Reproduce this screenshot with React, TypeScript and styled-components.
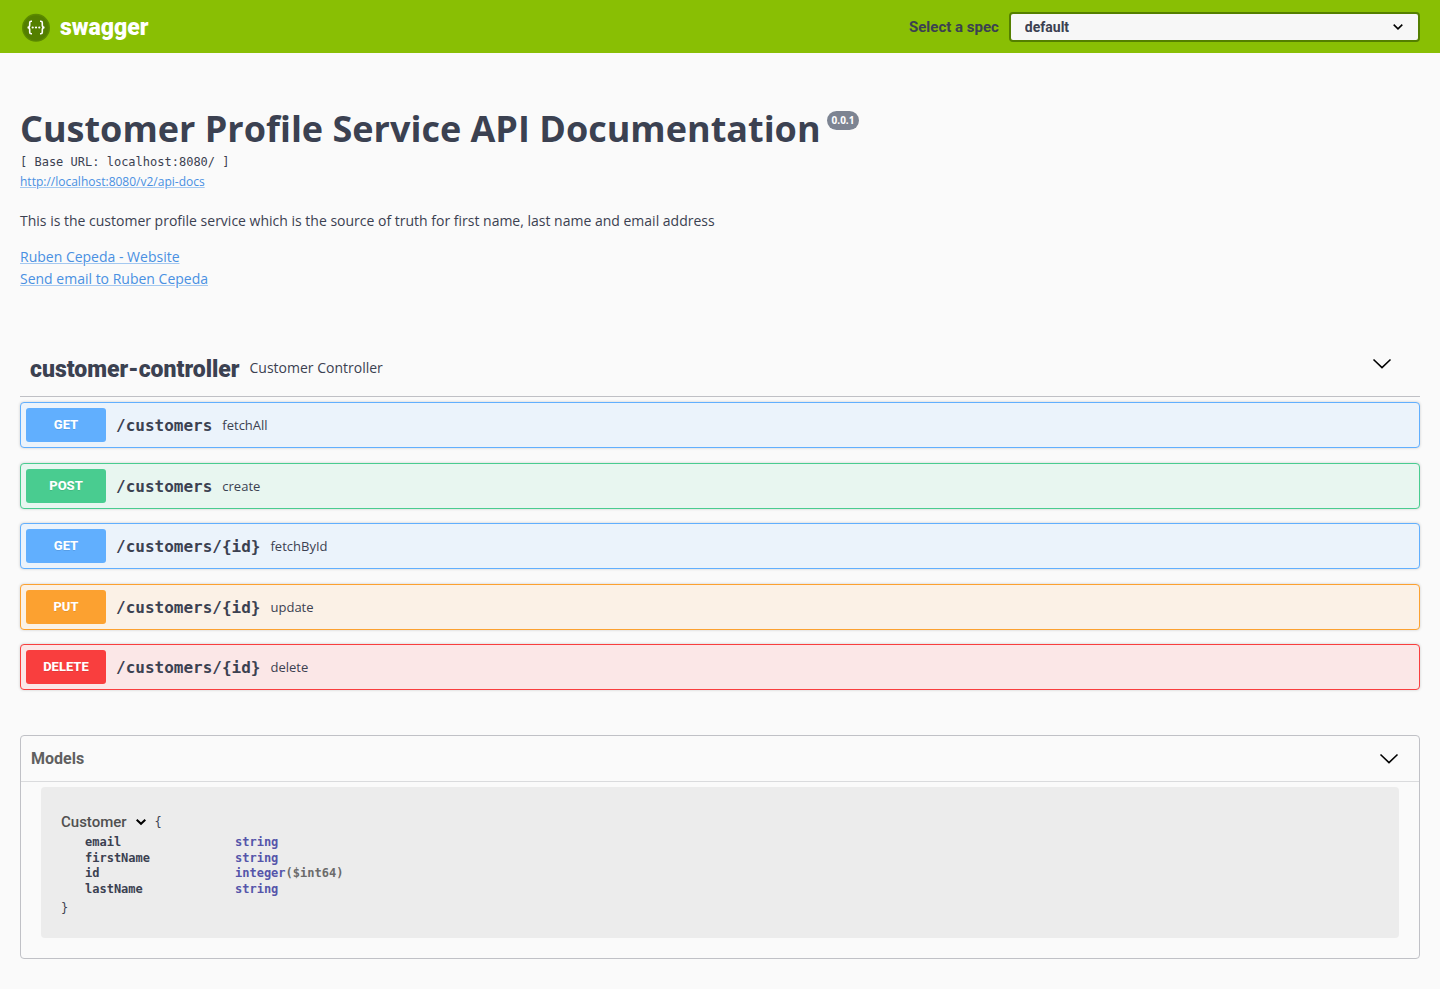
import React from "react";
import styled, { createGlobalStyle } from "styled-components";

const heading = `Roboto, "Open Sans", sans-serif`;
const body = `"Open Sans", "Noto Sans", sans-serif`;
const mono = `"DejaVu Sans Mono", "Liberation Mono", monospace`;

const GlobalStyle = createGlobalStyle`
  *, *::before, *::after { box-sizing: border-box; }
  body { margin: 0; background: #fafafa; color: #3b4151; font-family: ${body}; }
  button, select { font: inherit; color: inherit; }
  h1, h2, p { margin: 0; }
`;

const Topbar = styled.header`
  display: flex;
  align-items: center;
  justify-content: space-between;
  min-height: 53px;
  padding: 0 20px;
  background: #89bf04;
`;

const Brand = styled.a`
  display: flex;
  align-items: center;
  gap: 8px;
  color: #fff;
  font: 900 23px/34px ${heading};
  text-decoration: none;
`;

const BrandName = styled.span`
  padding-top: 2px;
`;

const SpecPicker = styled.div`
  display: flex;
  align-items: center;
  gap: 10px;
  flex: 0 1 511px;
  justify-content: flex-end;
  font: 700 15px/20px ${heading};
  white-space: nowrap;
`;

const SelectBox = styled.div`
  position: relative;
  flex: 1;
  svg {
    position: absolute;
    top: 11px;
    right: 16px;
    pointer-events: none;
  }
`;

const Select = styled.select`
  display: block;
  width: 100%;
  height: 30px;
  padding: 0 40px 0 14px;
  appearance: none;
  border: 2px solid #547f00;
  border-radius: 4px;
  background: #f7f7f7;
  font: 700 14px/20px ${heading};
`;

const Page = styled.main`
  padding: 52px 20px 30px;
`;

const Info = styled.section`
  display: flex;
  flex-direction: column;
  align-items: flex-start;
`;

const TitleRow = styled.div`
  display: flex;
  align-items: flex-start;
  gap: 6px;
`;

const Title = styled.h1`
  font: 700 36px/48px ${body};
`;

const Version = styled.span`
  margin-top: 6px;
  padding: 0 5px;
  border-radius: 10px;
  background: #7d8492;
  color: #fff;
  font: 700 10px/19px ${body};
`;

const BaseUrl = styled.pre`
  margin: 0;
  font: 400 12px/18px ${mono};
`;

const Link = styled.a<{ $small?: boolean }>`
  color: #4990e2;
  font-size: ${(p) => (p.$small ? 12 : 14)}px;
  line-height: 22px;
  text-decoration-color: #a4c8f0;
  text-underline-offset: 1px;
  text-decoration-thickness: 1px;
`;

const Description = styled.p`
  margin: 17px 0 14px;
  font-size: 14px;
  line-height: 22px;
`;

const TagHeader = styled.div`
  display: flex;
  align-items: flex-start;
  gap: 10px;
  min-height: 57px;
  margin: 50px 0 5px;
  padding: 12px 28px 0 10px;
  border-bottom: 1px solid #bfc0c5;
`;

const TagName = styled.h2`
  font: 900 23px/36px ${heading};
`;

const TagText = styled.span`
  flex: 1;
  font-size: 14px;
  line-height: 32px;
`;

const IconButton = styled.button`
  display: flex;
  padding: 6px 0;
  border: 0;
  background: none;
  cursor: pointer;
`;

const Operations = styled.div`
  display: flex;
  flex-direction: column;
  justify-content: space-between;
  min-height: 288px;
`;

const Operation = styled.button<{ $color: string; $fill: string }>`
  display: flex;
  align-items: center;
  gap: 10px;
  width: 100%;
  min-height: 46px;
  padding: 5px;
  border: 1px solid ${(p) => p.$color};
  border-radius: 4px;
  background: ${(p) => p.$fill};
  box-shadow: 0 0 3px rgba(0, 0, 0, 0.19);
  text-align: left;
  cursor: pointer;
`;

const Method = styled.span<{ $color: string }>`
  width: 80px;
  border-radius: 3px;
  background: ${(p) => p.$color};
  color: #fff;
  font: 800 13px/34px ${heading};
  text-align: center;
  text-shadow: 0 1px 0 rgba(0, 0, 0, 0.1);
`;

const Path = styled.span`
  padding-top: 2px;
  font: 700 16px/20px ${mono};
`;

const Summary = styled.span`
  font-size: 13px;
  line-height: 20px;
`;

const Models = styled.section`
  margin-top: 45px;
  padding-bottom: 20px;
  border: 1px solid #c0c1c6;
  border-radius: 4px;
`;

const ModelsHeader = styled.div`
  display: flex;
  align-items: center;
  justify-content: space-between;
  min-height: 46px;
  margin-bottom: 5px;
  padding: 0 20px 0 10px;
  border-bottom: 1px solid #dadbdd;
`;

const ModelsTitle = styled.h2`
  color: #606060;
  font: 700 16px/20px ${heading};
`;

const Model = styled.div`
  margin: 0 20px;
  padding: 24px 20px 20px;
  border-radius: 4px;
  background: #ececec;
  font: 400 12px/20px ${mono};
`;

const ModelToggle = styled.button`
  display: flex;
  align-items: center;
  gap: 8px;
  padding: 0;
  border: 0;
  background: none;
  font: 400 12px/22px ${mono};
  cursor: pointer;
`;

const ModelName = styled.span`
  color: #505050;
  font: 500 15px/22px ${heading};
`;

const Properties = styled.table`
  height: 62px;
  margin: 2px 0 1px 24px;
  border-collapse: collapse;
  font: 700 12px/15px ${mono};
  th {
    width: 150px;
    padding: 0;
    text-align: left;
  }
  td {
    padding: 0;
    color: #6b6b6b;
  }
`;

const TypeName = styled.span`
  color: #5555aa;
`;

const LargeArrow = () => (
  <svg width="20" height="12" viewBox="0 0 20 12" fill="none" stroke="#000" strokeWidth="1.6" aria-hidden="true">
    <path d="M1.5 1.5 10 9.7 18.5 1.5" />
  </svg>
);

const SmallArrow = ({ weight = 1.6 }: { weight?: number }) => (
  <svg width="12" height="8" viewBox="0 0 12 8" fill="none" stroke="#000" strokeWidth={weight} aria-hidden="true">
    <path d="M1.7 1.7 6 5.8 10.3 1.7" />
  </svg>
);

const Logo = () => (
  <svg width="32" height="32" viewBox="0 0 32 32" aria-hidden="true">
    <circle cx="16" cy="16.8" r="13.3" fill="#547f00" stroke="#5c8a00" strokeWidth="1.4" />
    <g fill="none" stroke="#fff" strokeWidth="1.6">
      <path d="M12 10.3h-.8q-1.5 0-1.5 1.5v2.4q0 2.2-2.2 2.3 2.2.1 2.2 2.3v2.4q0 1.5 1.5 1.5h.8" />
      <path d="M20 10.3h.8q1.5 0 1.5 1.5v2.4q0 2.2 2.2 2.3-2.2.1-2.2 2.3v2.4q0 1.5-1.5 1.5H20" />
    </g>
    <g fill="#fff">
      <circle cx="12.7" cy="16.5" r="1.1" />
      <circle cx="16" cy="16.5" r="1.1" />
      <circle cx="19.3" cy="16.5" r="1.1" />
    </g>
  </svg>
);

const palette = {
  GET: { color: "#61affe", fill: "#ebf3fb" },
  POST: { color: "#49cc90", fill: "#e8f6f0" },
  PUT: { color: "#fca130", fill: "#fbf1e6" },
  DELETE: { color: "#f93e3e", fill: "#fbe7e7" },
};

const operations: { method: keyof typeof palette; path: string; summary: string }[] = [
  { method: "GET", path: "/customers", summary: "fetchAll" },
  { method: "POST", path: "/customers", summary: "create" },
  { method: "GET", path: "/customers/{id}", summary: "fetchById" },
  { method: "PUT", path: "/customers/{id}", summary: "update" },
  { method: "DELETE", path: "/customers/{id}", summary: "delete" },
];

const properties = [
  { name: "email", type: "string" },
  { name: "firstName", type: "string" },
  { name: "id", type: "integer", format: "($int64)" },
  { name: "lastName", type: "string" },
];

export default function App() {
  return (
    <>
      <GlobalStyle />
      <Topbar>
        <Brand href="#">
          <Logo />
          <BrandName>swagger</BrandName>
        </Brand>
        <SpecPicker>
          <label htmlFor="spec">Select a spec</label>
          <SelectBox>
            <Select id="spec" defaultValue="default">
              <option value="default">default</option>
            </Select>
            <SmallArrow />
          </SelectBox>
        </SpecPicker>
      </Topbar>
      <Page>
        <Info>
          <TitleRow>
            <Title>Customer Profile Service API Documentation</Title>
            <Version>0.0.1</Version>
          </TitleRow>
          <BaseUrl>[ Base URL: localhost:8080/ ]</BaseUrl>
          <Link $small href="http://localhost:8080/v2/api-docs">
            http://localhost:8080/v2/api-docs
          </Link>
          <Description>
            This is the customer profile service which is the source of truth for first name, last name and email
            address
          </Description>
          <Link href="#website">Ruben Cepeda - Website</Link>
          <Link href="#email">Send email to Ruben Cepeda</Link>
        </Info>
        <section>
          <TagHeader>
            <TagName>customer-controller</TagName>
            <TagText>Customer Controller</TagText>
            <IconButton aria-label="Collapse operations">
              <LargeArrow />
            </IconButton>
          </TagHeader>
          <Operations>
            {operations.map(({ method, path, summary }) => (
              <Operation key={summary} $color={palette[method].color} $fill={palette[method].fill}>
                <Method $color={palette[method].color}>{method}</Method>
                <Path>{path}</Path>
                <Summary>{summary}</Summary>
              </Operation>
            ))}
          </Operations>
        </section>
        <Models>
          <ModelsHeader>
            <ModelsTitle>Models</ModelsTitle>
            <IconButton aria-label="Collapse models">
              <LargeArrow />
            </IconButton>
          </ModelsHeader>
          <Model>
            <ModelToggle>
              <ModelName>Customer</ModelName>
              <SmallArrow weight={2} />
              {"{"}
            </ModelToggle>
            <Properties>
              <tbody>
                {properties.map((p) => (
                  <tr key={p.name}>
                    <th scope="row">{p.name}</th>
                    <td>
                      <TypeName>{p.type}</TypeName>
                      {p.format}
                    </td>
                  </tr>
                ))}
              </tbody>
            </Properties>
            {"}"}
          </Model>
        </Models>
      </Page>
    </>
  );
}
